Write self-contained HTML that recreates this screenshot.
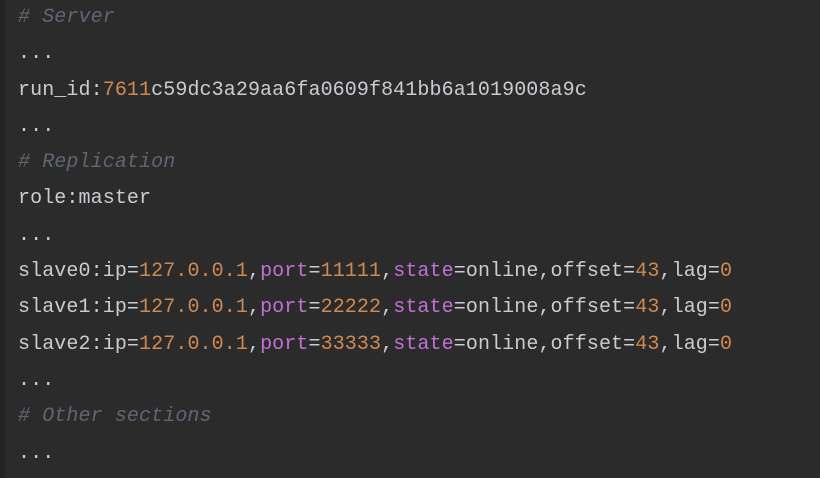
<!DOCTYPE html>
<html><head><meta charset="utf-8"><style>
html,body{margin:0;padding:0;width:820px;height:478px;overflow:hidden;background:#2b2b2b;}
.gut{position:absolute;left:0;top:0;width:5px;height:478px;background:#232323;}
pre{position:absolute;left:18px;top:0px;margin:0;font-family:"Liberation Mono",monospace;font-size:20px;line-height:36.3px;color:#c9ccd0;letter-spacing:0.1px;}
.c{color:#5f6672;font-style:italic;}
.o{color:#d0894f;}
.p{color:#c26fd6;}
</style></head><body><div class="gut"></div>
<pre><span class="c"># Server</span>
...
run_id:<span class="o">7611</span>c59dc3a29aa6fa0609f841bb6a1019008a9c
...
<span class="c"># Replication</span>
role:master
...
slave0:ip=<span class="o">127.0.0.1</span>,<span class="p">port</span>=<span class="o">11111</span>,<span class="p">state</span>=online,offset=<span class="o">43</span>,lag=<span class="o">0</span>
slave1:ip=<span class="o">127.0.0.1</span>,<span class="p">port</span>=<span class="o">22222</span>,<span class="p">state</span>=online,offset=<span class="o">43</span>,lag=<span class="o">0</span>
slave2:ip=<span class="o">127.0.0.1</span>,<span class="p">port</span>=<span class="o">33333</span>,<span class="p">state</span>=online,offset=<span class="o">43</span>,lag=<span class="o">0</span>
...
<span class="c"># Other sections</span>
...</pre>
</body></html>
